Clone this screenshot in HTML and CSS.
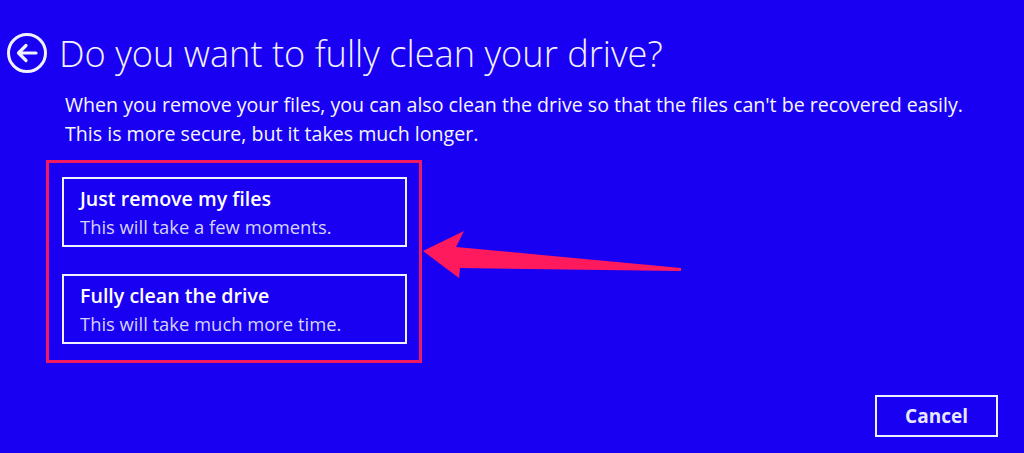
FILE: index.html
```html
<!DOCTYPE html>
<html lang="en">
<head>
<meta charset="utf-8">
<title>Do you want to fully clean your drive?</title>
<link rel="stylesheet" href="styles.css">
</head>
<body>
<div class="page">
  <header class="header">
    <svg class="back" viewBox="0 0 40 40" width="40" height="40" aria-hidden="true">
      <circle cx="20" cy="20" r="18.5" fill="none" stroke="#f2f2ff" stroke-width="3"/>
      <path d="M29 20H12M19 12.5L11.5 20L19 27.5" fill="none" stroke="#f2f2ff" stroke-width="3.2" stroke-linecap="round" stroke-linejoin="round"/>
    </svg>
    <h1 class="title">Do you want to fully clean your drive?</h1>
  </header>
  <p class="intro">When you remove your files, you can also clean the drive so that the files can't be recovered easily.<br>This is more secure, but it takes much longer.</p>
  <div class="highlight">
    <div class="option">
      <div class="opt-title">Just remove my files</div>
      <div class="opt-sub">This will take a few moments.</div>
    </div>
    <div class="option">
      <div class="opt-title">Fully clean the drive</div>
      <div class="opt-sub">This will take much more time.</div>
    </div>
  </div>
  <div class="footer">
    <button class="cancel">Cancel</button>
  </div>
  <svg class="arrow" viewBox="0 0 1024 453" width="1024" height="453" aria-hidden="true">
    <path d="M423 251 L464 231 L456 247 L681 268 L681 271 L460 268 L459 278 Z" fill="#ff1a5e"/>
  </svg>
</div>
</body>
</html>
```

FILE: styles.css
```css
* { box-sizing: border-box; }
html, body {
  margin: 0;
  padding: 0;
  background: #1a00f2;
}
.page {
  position: relative;
  width: 1024px;
  height: 453px;
  overflow: hidden;
  background: #1a00f2;
  color: #f4f4ff;
  font-family: "Open Sans", "Noto Sans", sans-serif;
  display: flex;
  flex-direction: column;
}
.header {
  display: flex;
  align-items: center;
  gap: 12px;
  padding: 33px 0 0 7px;
  height: 73px;
  flex: none;
}
.back { flex: none; display: block; }
.title {
  margin: 0;
  font-weight: 300;
  font-size: 36.2px;
  line-height: 40px;
  color: #f2f2ff;
  white-space: nowrap;
}
.intro {
  margin: 17px 0 0 65px;
  font-size: 19.6px;
  line-height: 29px;
  color: #f6f6ff;
  white-space: nowrap;
  flex: none;
}
.highlight {
  margin: 12px 0 0 46px;
  width: 376px;
  border: 3px solid #f01a60;
  padding: 14px 13px 16px 13px;
  display: flex;
  flex-direction: column;
  gap: 27px;
  flex: none;
}
.option {
  width: 345px;
  height: 70px;
  flex: none;
  border: 2px solid #f0f0ff;
  padding: 6px 0 0 16px;
}
.opt-title {
  font-weight: 600;
  font-size: 19.6px;
  line-height: 28px;
  color: #ffffff;
  white-space: nowrap;
}
.opt-sub {
  font-size: 18.4px;
  line-height: 28px;
  color: #d4d4ff;
  white-space: nowrap;
}
.footer {
  display: flex;
  justify-content: flex-end;
  padding: 32px 26px 0 0;
  flex: none;
}
.cancel {
  width: 123px;
  height: 42px;
  background: transparent;
  border: 2px solid #f0f0ff;
  color: #e8e8ff;
  font-family: "Open Sans", "Noto Sans", sans-serif;
  font-weight: 700;
  font-size: 19px;
  padding: 0;
  cursor: pointer;
}
.arrow {
  position: absolute;
  left: 0;
  top: 0;
  pointer-events: none;
}
```
